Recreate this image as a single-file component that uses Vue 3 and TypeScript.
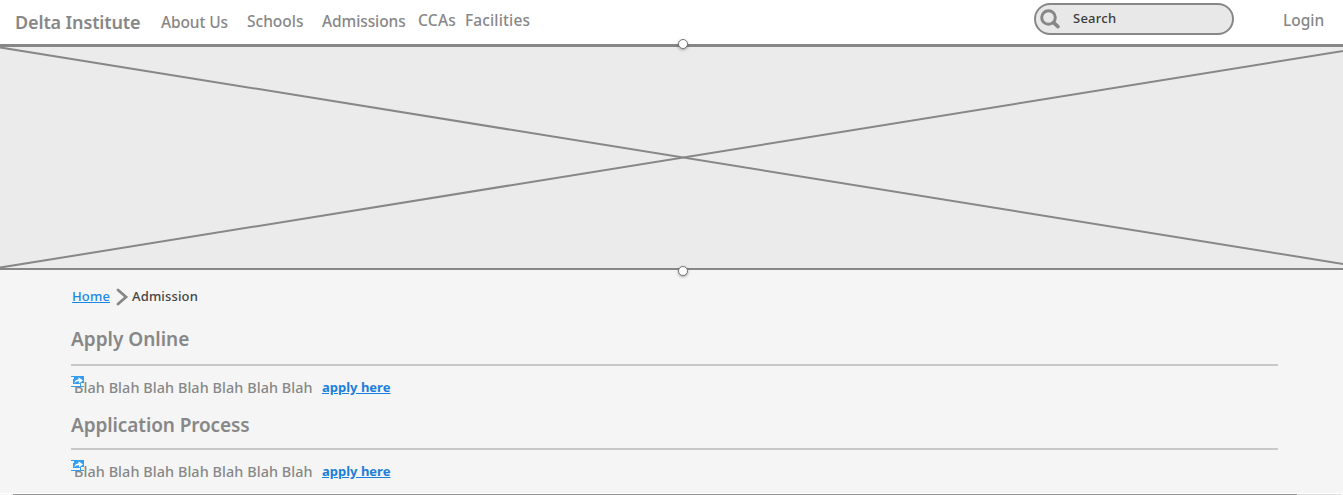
<script setup lang="ts">
interface NavItem { label: string; cls: string }
interface Section { title: string; cls: string }

const navItems: NavItem[] = [
  { label: 'About Us', cls: 'about' },
  { label: 'Schools', cls: 'schools' },
  { label: 'Admissions', cls: 'admissions' },
  { label: 'CCAs', cls: 'ccas' },
  { label: 'Facilities', cls: 'facilities' },
]
const sections: Section[] = [
  { title: 'Apply Online', cls: 'online' },
  { title: 'Application Process', cls: 'process' },
]
const filler = Array(7).fill('Blah').join(' ')
</script>

<template>
  <div class="page">
    <header class="topbar">
      <div class="brand">Delta Institute</div>
      <nav class="nav">
        <a v-for="item in navItems" :key="item.label" :class="item.cls">{{ item.label }}</a>
      </nav>
      <div class="search">
        <svg class="magnifier" width="21" height="21" viewBox="0 0 21 21">
          <circle cx="8.5" cy="8.5" r="6.8" fill="none" stroke="#878787" stroke-width="3" />
          <path d="M13.6 13.6L18 17.6" stroke="#878787" stroke-width="3.6" stroke-linecap="round" />
        </svg>
        <span>Search</span>
      </div>
      <a class="login">Login</a>
    </header>

    <section class="hero">
      <svg class="cross" width="1343" height="221" viewBox="0 0 1343 221">
        <path d="M0 .4L1367 220.8M0 220.6L1367 .2" stroke="#878787" stroke-width="2" />
      </svg>
      <i class="handle top"></i>
      <i class="handle bottom"></i>
    </section>

    <main class="content">
      <div class="crumbs">
        <a class="home">Home</a>
        <svg class="chevron" width="14" height="18" viewBox="0 0 14 18">
          <path d="M2 2L10 9L2 16" fill="none" stroke="#878787" stroke-width="2.8" stroke-linecap="round" />
        </svg>
        <span class="current">Admission</span>
      </div>
      <section v-for="section in sections" :key="section.title" class="block" :class="section.cls">
        <h2>{{ section.title }}</h2>
        <div class="row">
          <svg class="marker" width="13" height="11" viewBox="0 0 13 11">
            <rect width="13" height="11" fill="#359df2" />
            <path d="M0 1H3V3H2V8H9V10H0ZM10 7H13V10H10Z" fill="#f5f5f5" />
            <path d="M3.2 7.7C3.6 4.8 5 3.5 7.5 3.4V1.2L12 4.5L8 7.4V5.4C5.8 5.1 4.5 6 3.2 7.7Z" fill="#fff" />
          </svg>
          <span class="filler">{{ filler }}</span>
          <a class="apply">apply here</a>
        </div>
      </section>
    </main>
    <footer class="edge"></footer>
  </div>
</template>

<style>
html, body { margin: 0; overflow: hidden; background: #f5f5f5; }
</style>

<style scoped>
.page {
  width: 1343px;
  height: 495px;
  display: flex;
  flex-direction: column;
  overflow: hidden;
  background: #f5f5f5;
  color: #878787;
  font-family: "Noto Sans", "Open Sans", sans-serif;
  font-weight: 500;
}
.page * { box-sizing: border-box; }
.page span, .page a, .brand, h2 { white-space: nowrap; }
.topbar {
  flex: none;
  display: flex;
  align-items: flex-start;
  height: 47px;
  padding-left: 15px;
  background: #fff;
  border-bottom: 3px solid #878787;
}
.brand { width: 146px; padding-top: 10px; font-size: 18px; line-height: 24px; font-weight: 600; letter-spacing: -.13px; }
.nav { display: flex; width: 873px; font-size: 15.5px; line-height: 22px; }
.about { width: 86px; padding-top: 11px; letter-spacing: -.12px; }
.schools { width: 75px; padding-top: 10px; }
.admissions { width: 96px; padding-top: 10px; letter-spacing: -.1px; }
.ccas { width: 47px; padding-top: 9px; letter-spacing: .25px; }
.facilities { padding-top: 9px; letter-spacing: .13px; }
.search {
  display: flex;
  width: 200px;
  height: 32px;
  margin-top: 3px;
  padding: 4px 0 0 4px;
  border: 2px solid #878787;
  border-radius: 16px;
  background: #e8e8e8;
  color: #3a3a3a;
  font-size: 13px;
  line-height: 18px;
  letter-spacing: .25px;
}
.magnifier { flex: none; margin-right: 12px; }
.login { margin-left: 49px; padding-top: 9px; font-size: 15.5px; line-height: 22px; }
.hero {
  position: relative;
  flex: none;
  height: 223px;
  background: #ebebeb;
  border-bottom: 2px solid #878787;
}
.cross { display: block; }
.handle {
  position: absolute;
  left: 678px;
  width: 10px;
  height: 10px;
  border: 1px solid #777;
  border-radius: 50%;
  background: #fff;
  box-shadow: 0 1px 3px #0005;
}
.top { top: -8px; }
.bottom { bottom: -8px; }
.content { flex: 1; min-height: 0; padding: 16px 65px 0 71px; }
.crumbs { display: flex; height: 38px; font-size: 13px; line-height: 20px; letter-spacing: .15px; }
.home { width: 45px; padding-left: 1px; color: #1a86e8; text-decoration: underline; }
.chevron { flex: none; margin: 2px 2px 0 0; }
.current { color: #444; }
.block { height: 84px; }
.online { height: 86px; }
h2 {
  height: 42px;
  margin: 0;
  border-bottom: 2px solid #c8c8c8;
  font-size: 19px;
  line-height: 30px;
  font-weight: 600;
}
.process h2 { height: 40px; letter-spacing: -.1px; }
.row { display: flex; position: relative; padding: 11px 0 0 3px; line-height: 22px; }
.marker { position: absolute; left: 0; top: 10px; }
.filler { width: 248px; font-size: 14.4px; letter-spacing: .07px; }
.apply { margin-top: -1px; color: #1b7fdc; font-size: 13px; font-weight: 700; text-decoration: underline; }
.edge {
  flex: none;
  height: 2px;
  border-top: 1px solid #fff;
  background: linear-gradient(to right, #f5f5f5 13px, #969696 13px 1297px, #dcdcdc 1297px 1341px, #f5f5f5 1341px);
}
</style>
